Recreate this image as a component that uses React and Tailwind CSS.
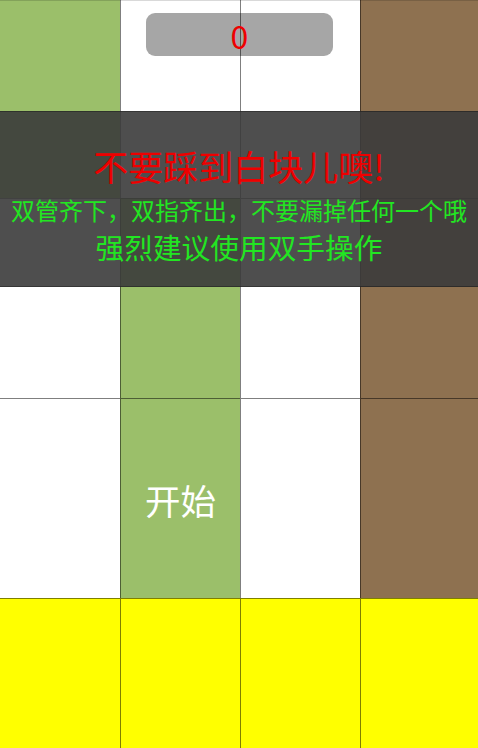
import React from "react";

const rows = [
  ["green", "white", "white", "brown"],
  ["white", "green", "white", "brown"],
  ["white", "green", "white", "brown"],
  ["yellow", "yellow", "yellow", "yellow"],
];

const tileBg = {
  green: "bg-[#9bbf6a]",
  white: "bg-white",
  brown: "bg-[#8e7150]",
  yellow: "bg-[#ffff00]",
};

const Tile = ({ color, first, children }) => (
  <div
    className={`${tileBg[color]} border-t border-black/50 ${
      first ? "" : "border-l"
    } flex items-center justify-center`}
  >
    {children}
  </div>
);

export default function App() {
  return (
    <div
      className="relative w-[478px] h-[748px] overflow-hidden bg-white"
      style={{ fontFamily: '"Noto Sans CJK SC", "Noto Sans", sans-serif' }}
    >
      {/* tile board */}
      <div className="-mt-[2px] grid grid-cols-[120px_120px_120px_1fr] grid-rows-[200px_200px_200px_200px]">
        {rows.map((row, r) =>
          row.map((c, i) => (
            <Tile key={`${r}-${i}`} color={c} first={i === 0}>
              {r === 2 && i === 1 ? (
                <span className="text-white text-[35.5px] leading-none mt-[3px]">开始</span>
              ) : null}
            </Tile>
          ))
        )}
      </div>
      <div className="absolute left-0 right-0 top-0 h-px bg-black/15" />

      {/* score */}
      <div className="absolute left-[146px] top-[13px] w-[187px] h-[43px] rounded-[9px] bg-black/35 flex items-center justify-center">
        <span className="text-[#ee0000] text-[32px] leading-none">0</span>
      </div>

      {/* tips */}
      <div className="absolute left-0 right-0 top-[111px] h-[176px] bg-[#3b3b3b]/90 border-y border-black/30 flex flex-col items-center pt-[34px]">
        <div className="text-[#ee0000] text-[35px] leading-[40px]">不要踩到白块儿噢!</div>
        <div className="text-[#22e622] text-[24px] leading-[30px] mt-[9px] whitespace-nowrap">
          双管齐下，双指齐出，不要漏掉任何一个哦
        </div>
        <div className="text-[#22e622] text-[28.7px] leading-[36px] mt-[4px]">强烈建议使用双手操作</div>
      </div>
    </div>
  );
}
